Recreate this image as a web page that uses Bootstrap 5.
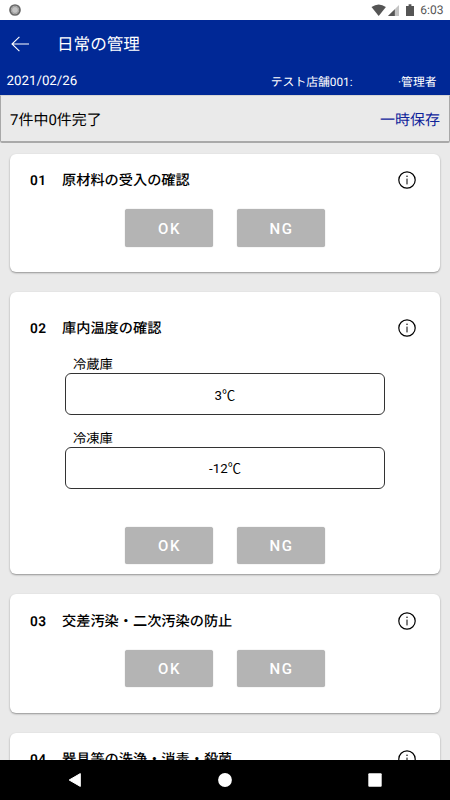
<!DOCTYPE html>
<html lang="ja">
<head>
<meta charset="utf-8">
<meta name="viewport" content="width=device-width, initial-scale=1">
<title>日常の管理</title>
<link href="https://cdn.jsdelivr.net/npm/bootstrap@5.3.0/dist/css/bootstrap.min.css" rel="stylesheet">
<style>
body { height: 800px; background: #eaeaea; font-family: Roboto, "Noto Sans CJK JP", sans-serif; color: #000; line-height: 20px; text-rendering: geometricPrecision; }
.status-bar { height: 20px; font-size: 12px; color: #555; padding: 0 6.5px 0 9px; }
.app-bar { height: 75px; background: #002896; }
.app-title { height: 48px; padding-left: 11px; font-size: 16.6px; }
.app-title svg { margin-right: 27px; }
.app-title span { padding-top: 3px; }
.app-info { height: 27px; padding: 0 13.5px 0 6.5px; font-size: 13.3px; }
.store { font-size: 11.8px; }
.store-gap { width: 45.5px; }
.progress-line { height: 48px; border: 1px solid #a8a8a8; border-top-color: #d5d5d5; border-bottom: 2px solid #a9a9a9; border-radius: 0 0 2px 2px; padding: 2px 9px 0; font-size: 15px; }
.save-link { color: #10249a; }
.task-list { padding: 10.5px 10px 0; gap: 20px; }
.task { --bs-card-border-width: 0; --bs-card-border-radius: 6px; height: 118.5px; padding-top: 15.5px; box-shadow: 0 1px 2px rgba(0,0,0,.38); flex-shrink: 0; color: #000; }
.task-tall { height: 282px; padding-top: 25px; }
.task-head { height: 22px; padding: 0 24px 0 20px; font-size: 14.2px; font-weight: 500; }
.task-head span { padding-top: 2px; }
.task-no { width: 32px; font-weight: 600; letter-spacing: .4px; font-size: 13.7px; }
.answers { gap: 24px; margin-top: 18px; }
.task-tall .answers { margin-top: 38px; }
.answer { --bs-btn-color: #fff; --bs-btn-bg: #b4b4b4; --bs-btn-hover-color: #fff; --bs-btn-hover-bg: #a6a6a6; --bs-btn-border-radius: 2.5px; --bs-btn-border-width: 0; --bs-btn-padding-y: 0; --bs-btn-padding-x: 0; width: 88px; height: 37.5px; font-size: 15px; font-weight: 500; letter-spacing: 1.6px; box-shadow: 0 0 1px rgba(0,0,0,.35); padding: 2px 0 0 1px; }
.reading { width: 320px; margin: 16px auto 0; font-size: 13.3px; }
.reading + .reading { margin-top: 13.5px; }
.reading label { height: 18px; padding: 1px 0 0 8px; display: block; }
.reading input { height: 42px; border: 1px solid #333; border-radius: 6px; font-size: 13.3px; padding: 0; color: #000; }
.nav-keys { height: 40px; background: #000; }
</style>
</head>
<body class="d-flex flex-column overflow-hidden">
<div class="status-bar bg-white d-flex align-items-center flex-shrink-0">
  <svg width="12" height="12" viewBox="0 0 12 12"><circle cx="6" cy="6" r="5" fill="#c4c4c4" stroke="#686868" stroke-width="1.7"/><circle cx="6" cy="6" r="3.5" fill="none" stroke="#999" stroke-width="1"/></svg>
  <svg class="ms-auto" width="45" height="14" viewBox="0 0 45 14" fill="#555"><path d="M.3 3.7Q7.5-1.3 14.7 3.7L7.5 12.8Z" transform="translate(.2 .2)"/><path d="M17 13 28 2V13Z" fill="#c4c4c4"/><path d="M17 13 23.8 6.2V13Z"/><path d="M35 3h2.6V1.3h2.8V3H43v10h-8Z"/></svg>
  <span class="ms-1">6:03</span>
</div>
<header class="app-bar text-white flex-shrink-0">
  <div class="app-title d-flex align-items-center">
    <svg width="19" height="16" viewBox="0 0 19 16" fill="none" stroke="#fff" stroke-width="1.1"><path d="M8.4.8 1 8l7.4 7.2M1 8h17"/></svg>
    <span>日常の管理</span>
  </div>
  <div class="app-info d-flex align-items-center">
    <span>2021/02/26</span>
    <span class="store ms-auto">テスト店舗001:</span><span class="store-gap"></span><span class="store">·管理者</span>
  </div>
</header>
<div class="progress-line d-flex align-items-center justify-content-between flex-shrink-0">
  <span>7件中0件完了</span>
  <a class="save-link text-decoration-none" href="#">一時保存</a>
</div>
<svg class="d-none">
  <symbol id="info" viewBox="0 0 18 18"><circle cx="9" cy="9" r="8.2" fill="none" stroke="#000" stroke-width="1.2"/><circle cx="9" cy="5.2" r=".75"/><path d="M9 7.6v5.8" stroke="#000" stroke-width="1"/></symbol>
</svg>
<main class="task-list d-flex flex-column flex-grow-1 overflow-hidden">
  <section class="card task">
    <div class="task-head d-flex align-items-center"><span class="task-no">01</span><span>原材料の受入の確認</span><svg class="ms-auto" width="18" height="18"><use href="#info"/></svg></div>
    <div class="answers d-flex justify-content-center"><button class="btn answer">OK</button><button class="btn answer">NG</button></div>
  </section>
  <section class="card task task-tall">
    <div class="task-head d-flex align-items-center"><span class="task-no">02</span><span>庫内温度の確認</span><svg class="ms-auto" width="18" height="18"><use href="#info"/></svg></div>
    <div class="reading"><label for="fridge">冷蔵庫</label><input id="fridge" class="form-control text-center" value="3℃"></div>
    <div class="reading"><label for="freezer">冷凍庫</label><input id="freezer" class="form-control text-center" value="-12℃"></div>
    <div class="answers d-flex justify-content-center"><button class="btn answer">OK</button><button class="btn answer">NG</button></div>
  </section>
  <section class="card task">
    <div class="task-head d-flex align-items-center"><span class="task-no">03</span><span>交差汚染・二次汚染の防止</span><svg class="ms-auto" width="18" height="18"><use href="#info"/></svg></div>
    <div class="answers d-flex justify-content-center"><button class="btn answer">OK</button><button class="btn answer">NG</button></div>
  </section>
  <section class="card task">
    <div class="task-head d-flex align-items-center"><span class="task-no">04</span><span>器具等の洗浄・消毒・殺菌</span><svg class="ms-auto" width="18" height="18"><use href="#info"/></svg></div>
  </section>
</main>
<nav class="nav-keys d-flex align-items-center justify-content-around flex-shrink-0">
  <svg width="14" height="16" viewBox="0 0 14 16"><path d="M1.2 8 12.3 1.6V14.4Z" fill="#fff" stroke="#fff" stroke-linejoin="round"/></svg>
  <svg width="14" height="14" viewBox="0 0 14 14"><circle cx="7" cy="7" r="6.9" fill="#fff"/></svg>
  <svg width="14" height="14" viewBox="0 0 14 14"><rect x=".3" y=".3" width="13.4" height="13.4" rx="1" fill="#fff"/></svg>
</nav>
<script src="https://cdn.jsdelivr.net/npm/bootstrap@5.3.0/dist/js/bootstrap.bundle.min.js"></script>
</body>
</html>
